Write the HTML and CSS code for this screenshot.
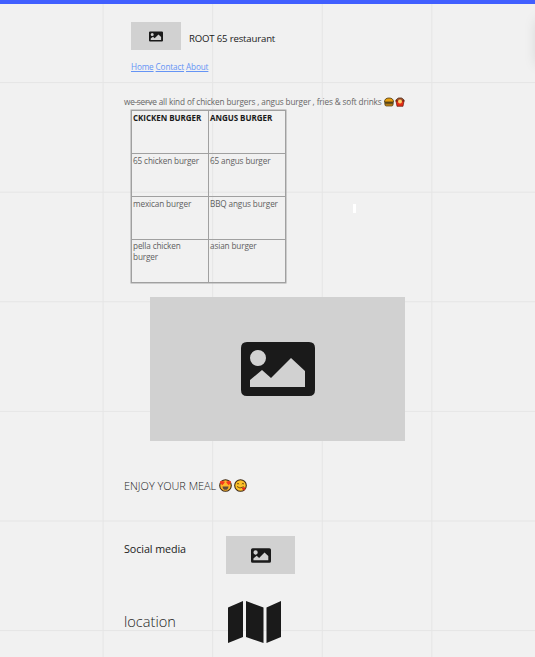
FILE: index.html
```html
<!DOCTYPE html>
<html lang="en">
<head>
<meta charset="utf-8">
<title>ROOT 65 restaurant</title>
<link rel="stylesheet" href="styles.css">
</head>
<body>
<svg class="symbols" aria-hidden="true">
  <symbol id="picture" viewBox="0 0 74 54">
    <path fill="#1a1a1a" fill-rule="evenodd" d="M6 0H68Q74 0 74 6V48Q74 54 68 54H6Q0 54 0 48V6Q0 0 6 0ZM17 8A8 8 0 1 0 17 24A8 8 0 1 0 17 8ZM9 45H64V29L50 16L30 36L21 28L9 38Z"/>
  </symbol>
</svg>
<main class="board">
  <header class="header">
    <div class="picture picture-logo"><svg><use href="#picture"/></svg></div>
    <h1 class="brand">ROOT 65 restaurant</h1>
  </header>
  <nav class="nav"><a href="#">Home</a> <a href="#">Contact</a> <a href="#">About</a></nav>
  <div class="intro">
    <p>w<span class="marked">e serve</span> all kind of chicken burgers , angus burger , fries &amp; soft drinks</p>
    <svg class="food" viewBox="0 0 10 10"><path d="M.5 5Q.5 1 5 1Q9.5 1 9.5 5Z" fill="#e8a010" stroke="#4a350c" stroke-width=".8"/><path d="M.4 5H9.6V6.8H.4Z" fill="#584514"/><path d="M.8 6.8H9.2Q9.2 9 7.8 9H2.2Q.8 9 .8 6.8Z" fill="#c98c1b" stroke="#4a350c" stroke-width=".7"/></svg>
    <svg class="food" viewBox="0 0 10 10"><path d="M1 4.5Q.6 2.5 2 2L3.5 1H6.5L8 2Q9.4 2.5 9 4.5Z" fill="#a5502b" stroke="#4c2918" stroke-width=".8"/><path d="M.9 3.5Q5 5.5 9.1 3.5L8 9.3H2Z" fill="#e32d16" stroke="#64190f" stroke-width=".7"/><circle cx="5" cy="4.4" r="2" fill="#ffcf68"/></svg>
  </div>
  <table class="menu">
    <tr><th>CKICKEN BURGER</th><th>ANGUS BURGER</th></tr>
    <tr><td>65 chicken burger</td><td>65 angus burger</td></tr>
    <tr><td>mexican burger</td><td>BBQ angus burger</td></tr>
    <tr class="last"><td>pella chicken<br>burger</td><td>asian burger</td></tr>
  </table>
  <div class="picture picture-hero"><svg><use href="#picture"/></svg></div>
  <div class="enjoy">
    <p>ENJOY YOUR MEAL</p>
    <svg class="face" viewBox="0 0 13 13"><circle cx="6.5" cy="6.5" r="5.8" fill="#ffb52b" stroke="#3d2a16" stroke-width="1.1"/><path d="M3.4 6.3L1 3.9Q.5 2 2.2 1.8Q3.3 1.5 3.8 2.6Q5.5 1.8 5.7 3.5ZM9.6 6.3L12 3.9Q12.5 2 10.8 1.8Q9.7 1.5 9.2 2.6Q7.5 1.8 7.3 3.5Z" fill="#f4381e"/><path d="M3.5 7.4H9.5Q9.2 10.8 6.5 10.8Q3.8 10.8 3.5 7.4Z" fill="#624b3d"/></svg>
    <svg class="face" viewBox="0 0 13 13"><circle cx="6.5" cy="6.5" r="5.8" fill="#ffc229" stroke="#3d2a16" stroke-width="1.1"/><path d="M3 5.2Q4 3.5 5.1 5.2M7.8 5.2Q8.9 3.5 10 5.2M3 7.5Q5.5 10.4 9.8 7.7" fill="none" stroke="#60420d" stroke-width=".9"/><path d="M7.6 9.1L10.4 7.9Q12.3 9.8 10.7 11.3Q9 12 7.6 9.1Z" fill="#e52a1b"/></svg>
  </div>
  <section class="social">
    <h2>Social media</h2>
    <div class="picture picture-social"><svg><use href="#picture"/></svg></div>
  </section>
  <section class="location">
    <h2>location</h2>
    <svg class="map" viewBox="0 0 53 42"><path fill="#1a1a1a" d="M0 6.5L15 0V36L0 42ZM18 0L35.5 6.5V42L18 36ZM38.5 6.5L53 0V36L38.5 42Z"/></svg>
  </section>
</main>
<i class="cursor-mark"></i>
<i class="panel-shadow"></i>
</body>
</html>
```
FILE: styles.css
```css
* { box-sizing: border-box; }
body {
  margin: 0;
  height: 657px;
  overflow: hidden;
  position: relative;
  border-top: 4px solid #415fff;
  background-color: #f1f1f1;
  background-image:
    linear-gradient(90deg, #e5e5e5 1.4px, transparent 1.4px),
    linear-gradient(#e5e5e5 1.4px, transparent 1.4px);
  background-size: 109.6px 109.6px;
  background-position: -7px -27.5px;
  font-family: "Open Sans", sans-serif;
  color: #1a1a1a;
}
h1, h2, p { margin: 0; font-weight: 400; white-space: nowrap; }
svg { display: block; }
.symbols { width: 0; height: 0; position: absolute; }
.board { padding: 18px 0 0 124px; }
.picture { display: flex; align-items: center; justify-content: center; background: #d1d1d1; }
.header { display: flex; height: 28px; margin-left: 7px; gap: 8px; }
.picture-logo { width: 50px; height: 28px; }
.picture-logo svg { width: 14px; height: 11px; }
.brand { font-size: 9.6px; letter-spacing: -.17px; line-height: 33px; }
.nav { height: 12px; margin: 11px 0 0 7px; font-size: 8.2px; letter-spacing: -.14px; line-height: 12px; color: #6594f5; white-space: nowrap; }
.nav a { color: #6594f5; }
.intro { display: flex; align-items: center; height: 12px; margin-top: 23px; font-size: 8.2px; letter-spacing: -.12px; line-height: 12px; color: #666; }
.marked { text-decoration: line-through #999; text-decoration-thickness: 1px; }
.food { width: 10px; height: 10px; margin-left: 2px; }
.food + .food { margin-left: 1px; }
.menu { width: 155px; height: 173px; margin: 2px 0 0 7px; border-collapse: collapse; table-layout: fixed; border: 1px solid #a0a0a0; box-shadow: 0 0 0 .5px #a6a6a6; font-size: 8.2px; letter-spacing: -.13px; line-height: 11px; color: #606060; }
.menu th, .menu td { height: 43px; padding: 1px; border: 1px solid #a0a0a0; vertical-align: top; text-align: left; white-space: nowrap; }
.menu th { font-size: 8px; letter-spacing: -.04px; color: #1a1a1a; }
.menu .last td { padding-top: 0; }
.picture-hero { width: 255px; height: 144px; margin: 14px 0 0 26px; }
.picture-hero svg { width: 74px; height: 54px; }
.enjoy { display: flex; align-items: center; height: 16px; margin-top: 36px; font-size: 10.9px; }
.enjoy p { font-weight: 350; margin-right: 3px; }
.face { width: 13px; height: 13px; margin-right: 2px; }
.social { display: flex; height: 38px; margin-top: 43px; }
.social h2 { width: 102px; font-size: 10.75px; letter-spacing: -.08px; font-weight: 370; line-height: 26px; }
.picture-social { width: 69px; height: 38px; }
.picture-social svg { width: 20px; height: 15px; }
.location { display: flex; height: 42px; margin-top: 27px; }
.location h2 { width: 104px; font-size: 14.6px; font-weight: 350; line-height: 41px; }
.map { width: 53px; height: 42px; }
.cursor-mark { position: absolute; left: 353px; top: 200px; width: 3px; height: 9px; background: #fff; }
.panel-shadow { position: absolute; left: 537px; top: 16px; width: 20px; height: 44px; box-shadow: 0 0 14px rgba(0, 0, 0, .13); }
```
